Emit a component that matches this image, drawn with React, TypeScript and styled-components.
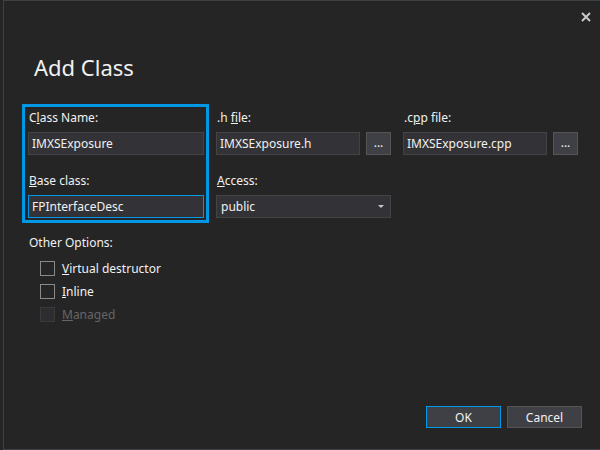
import React from 'react';
import styled, {createGlobalStyle, css} from "styled-components";

const GlobalStyle = createGlobalStyle`
  body {
    margin: 0;
    background: #252526;
    font-family: "Noto Sans", "Open Sans", sans-serif;
    font-size: 12px;
    color: #f1f1f1;
  }
`

function App() {
    return (
        <>
            <GlobalStyle/>
            <Window>
                <TitleBar>
                    <CloseButton aria-label="Close">
                        <svg width="10" height="10" viewBox="0 0 10 10">
                            <path d="M1 1 L9 9 M9 1 L1 9" stroke="#c8c8c8" strokeWidth="2"/>
                        </svg>
                    </CloseButton>
                </TitleBar>
                <Heading>Add Class</Heading>

                <FormRow>
                    <HighlightBox>
                        <Field>
                            <Label>C<u>l</u>ass Name:</Label>
                            <TextInput defaultValue="IMXSExposure" width={176}/>
                        </Field>
                        <Field>
                            <Label><u>B</u>ase class:</Label>
                            <TextInput defaultValue="FPInterfaceDesc" width={176} focused/>
                        </Field>
                    </HighlightBox>

                    <Column gapLeft={7}>
                        <Field>
                            <Label>.h <u>f</u>ile:</Label>
                            <InputRow>
                                <TextInput defaultValue="IMXSExposure.h" width={144}/>
                                <BrowseButton>...</BrowseButton>
                            </InputRow>
                        </Field>
                        <Field>
                            <Label><u>A</u>ccess:</Label>
                            <Select>
                                <span>public</span>
                                <Arrow/>
                            </Select>
                        </Field>
                    </Column>

                    <Column gapLeft={12}>
                        <Field>
                            <Label>.c<u>p</u>p file:</Label>
                            <InputRow>
                                <TextInput defaultValue="IMXSExposure.cpp" width={144}/>
                                <BrowseButton>...</BrowseButton>
                            </InputRow>
                        </Field>
                    </Column>
                </FormRow>

                <Options>
                    <Label>Other Options:</Label>
                    <CheckList>
                        <CheckRow>
                            <CheckBox/>
                            <span><u>V</u>irtual destructor</span>
                        </CheckRow>
                        <CheckRow>
                            <CheckBox/>
                            <span><u>I</u>nline</span>
                        </CheckRow>
                        <CheckRow disabled>
                            <CheckBox disabled/>
                            <span><u>M</u>anaged</span>
                        </CheckRow>
                    </CheckList>
                </Options>

                <Footer>
                    <DialogButton primary>OK</DialogButton>
                    <DialogButton>Cancel</DialogButton>
                </Footer>
            </Window>
        </>
    );
}

export default App;

const Window = styled.div`
  box-sizing: border-box;
  width: 597px;
  height: 450px;
  margin-left: 3px;
  border-left: 1px solid #3f3f46;
  border-top: 1px solid #3f3f46;
  border-bottom: 1px solid #3f3f46;
  display: flex;
  flex-direction: column;
  padding-left: 18px;
`
const TitleBar = styled.div`
  height: 31px;
  display: flex;
  justify-content: flex-end;
  align-items: center;
  padding-right: 7px;
`
const CloseButton = styled.div`
  width: 14px;
  height: 14px;
  display: flex;
  align-items: center;
  justify-content: center;
  margin-top: 1px;
`
const Heading = styled.h1`
  margin: 19px 0 21px 12px;
  font-family: "Noto Sans", "Open Sans", sans-serif;
  font-weight: 400;
  font-size: 22px;
  line-height: 32px;
  color: #f1f1f1;
`
const FormRow = styled.div`
  display: flex;
  align-items: flex-start;
`
const HighlightBox = styled.div`
  border: 3px solid #0097e6;
  padding: 3px 2px 2px 3px;
  display: flex;
  flex-direction: column;
  gap: 18px;
`
const Column = styled.div<{ gapLeft: number }>`
  margin-left: ${p => p.gapLeft}px;
  padding-top: 6px;
  display: flex;
  flex-direction: column;
  gap: 18px;
`
const Field = styled.div`
  display: flex;
  flex-direction: column;
  gap: 6px;
`
const Label = styled.div`
  line-height: 16px;
  padding-left: 1px;
  white-space: nowrap;
`
const InputRow = styled.div`
  display: flex;
  gap: 6px;
`
const TextInput = styled.input<{ width: number, focused?: boolean }>`
  box-sizing: border-box;
  width: ${p => p.width}px;
  height: 23px;
  margin: 0;
  padding: 0 3px;
  background: #333337;
  border: 1px solid ${p => p.focused ? "#0097e6" : "#434346"};
  color: #f1f1f1;
  font-family: "Noto Sans", "Open Sans", sans-serif;
  font-size: 12px;
  outline: none;
`
const BrowseButton = styled.div`
  box-sizing: border-box;
  width: 25px;
  height: 23px;
  background: #3f3f46;
  border: 1px solid #555555;
  display: flex;
  align-items: center;
  justify-content: center;
  line-height: 14px;
  padding-bottom: 2px;
`
const Select = styled.div`
  box-sizing: border-box;
  width: 175px;
  height: 23px;
  background: #333337;
  border: 1px solid #434346;
  display: flex;
  align-items: center;
  justify-content: space-between;
  padding: 0 6px 0 4px;
`
const Arrow = styled.div`
  width: 0;
  height: 0;
  border-left: 3px solid transparent;
  border-right: 3px solid transparent;
  border-top: 3px solid #c8c8c8;
`
const Options = styled.div`
  margin-top: 12px;
  padding-left: 6px;
  display: flex;
  flex-direction: column;
  gap: 10px;
`
const CheckList = styled.div`
  display: flex;
  flex-direction: column;
  gap: 8px;
  padding-left: 12px;
`
const CheckRow = styled.div<{ disabled?: boolean }>`
  display: flex;
  align-items: center;
  gap: 7px;
  height: 15px;
  color: ${p => p.disabled ? "#656565" : "#f1f1f1"};
`
const CheckBox = styled.div<{ disabled?: boolean }>`
  box-sizing: border-box;
  width: 15px;
  height: 15px;
  ${p => p.disabled ? css`
    background: #2d2d30;
    border: 1px solid #3a3a3d;
  ` : css`
    background: #252526;
    border: 1px solid #8a8a8a;
  `}
`
const Footer = styled.div`
  margin-top: auto;
  margin-bottom: 21px;
  padding-right: 18px;
  display: flex;
  justify-content: flex-end;
  gap: 6px;
`
const DialogButton = styled.div<{ primary?: boolean }>`
  box-sizing: border-box;
  width: 75px;
  height: 22px;
  background: #3f3f46;
  border: 1px solid ${p => p.primary ? "#0097e6" : "#555555"};
  display: flex;
  align-items: center;
  justify-content: center;
  font-size: 12px;
`
